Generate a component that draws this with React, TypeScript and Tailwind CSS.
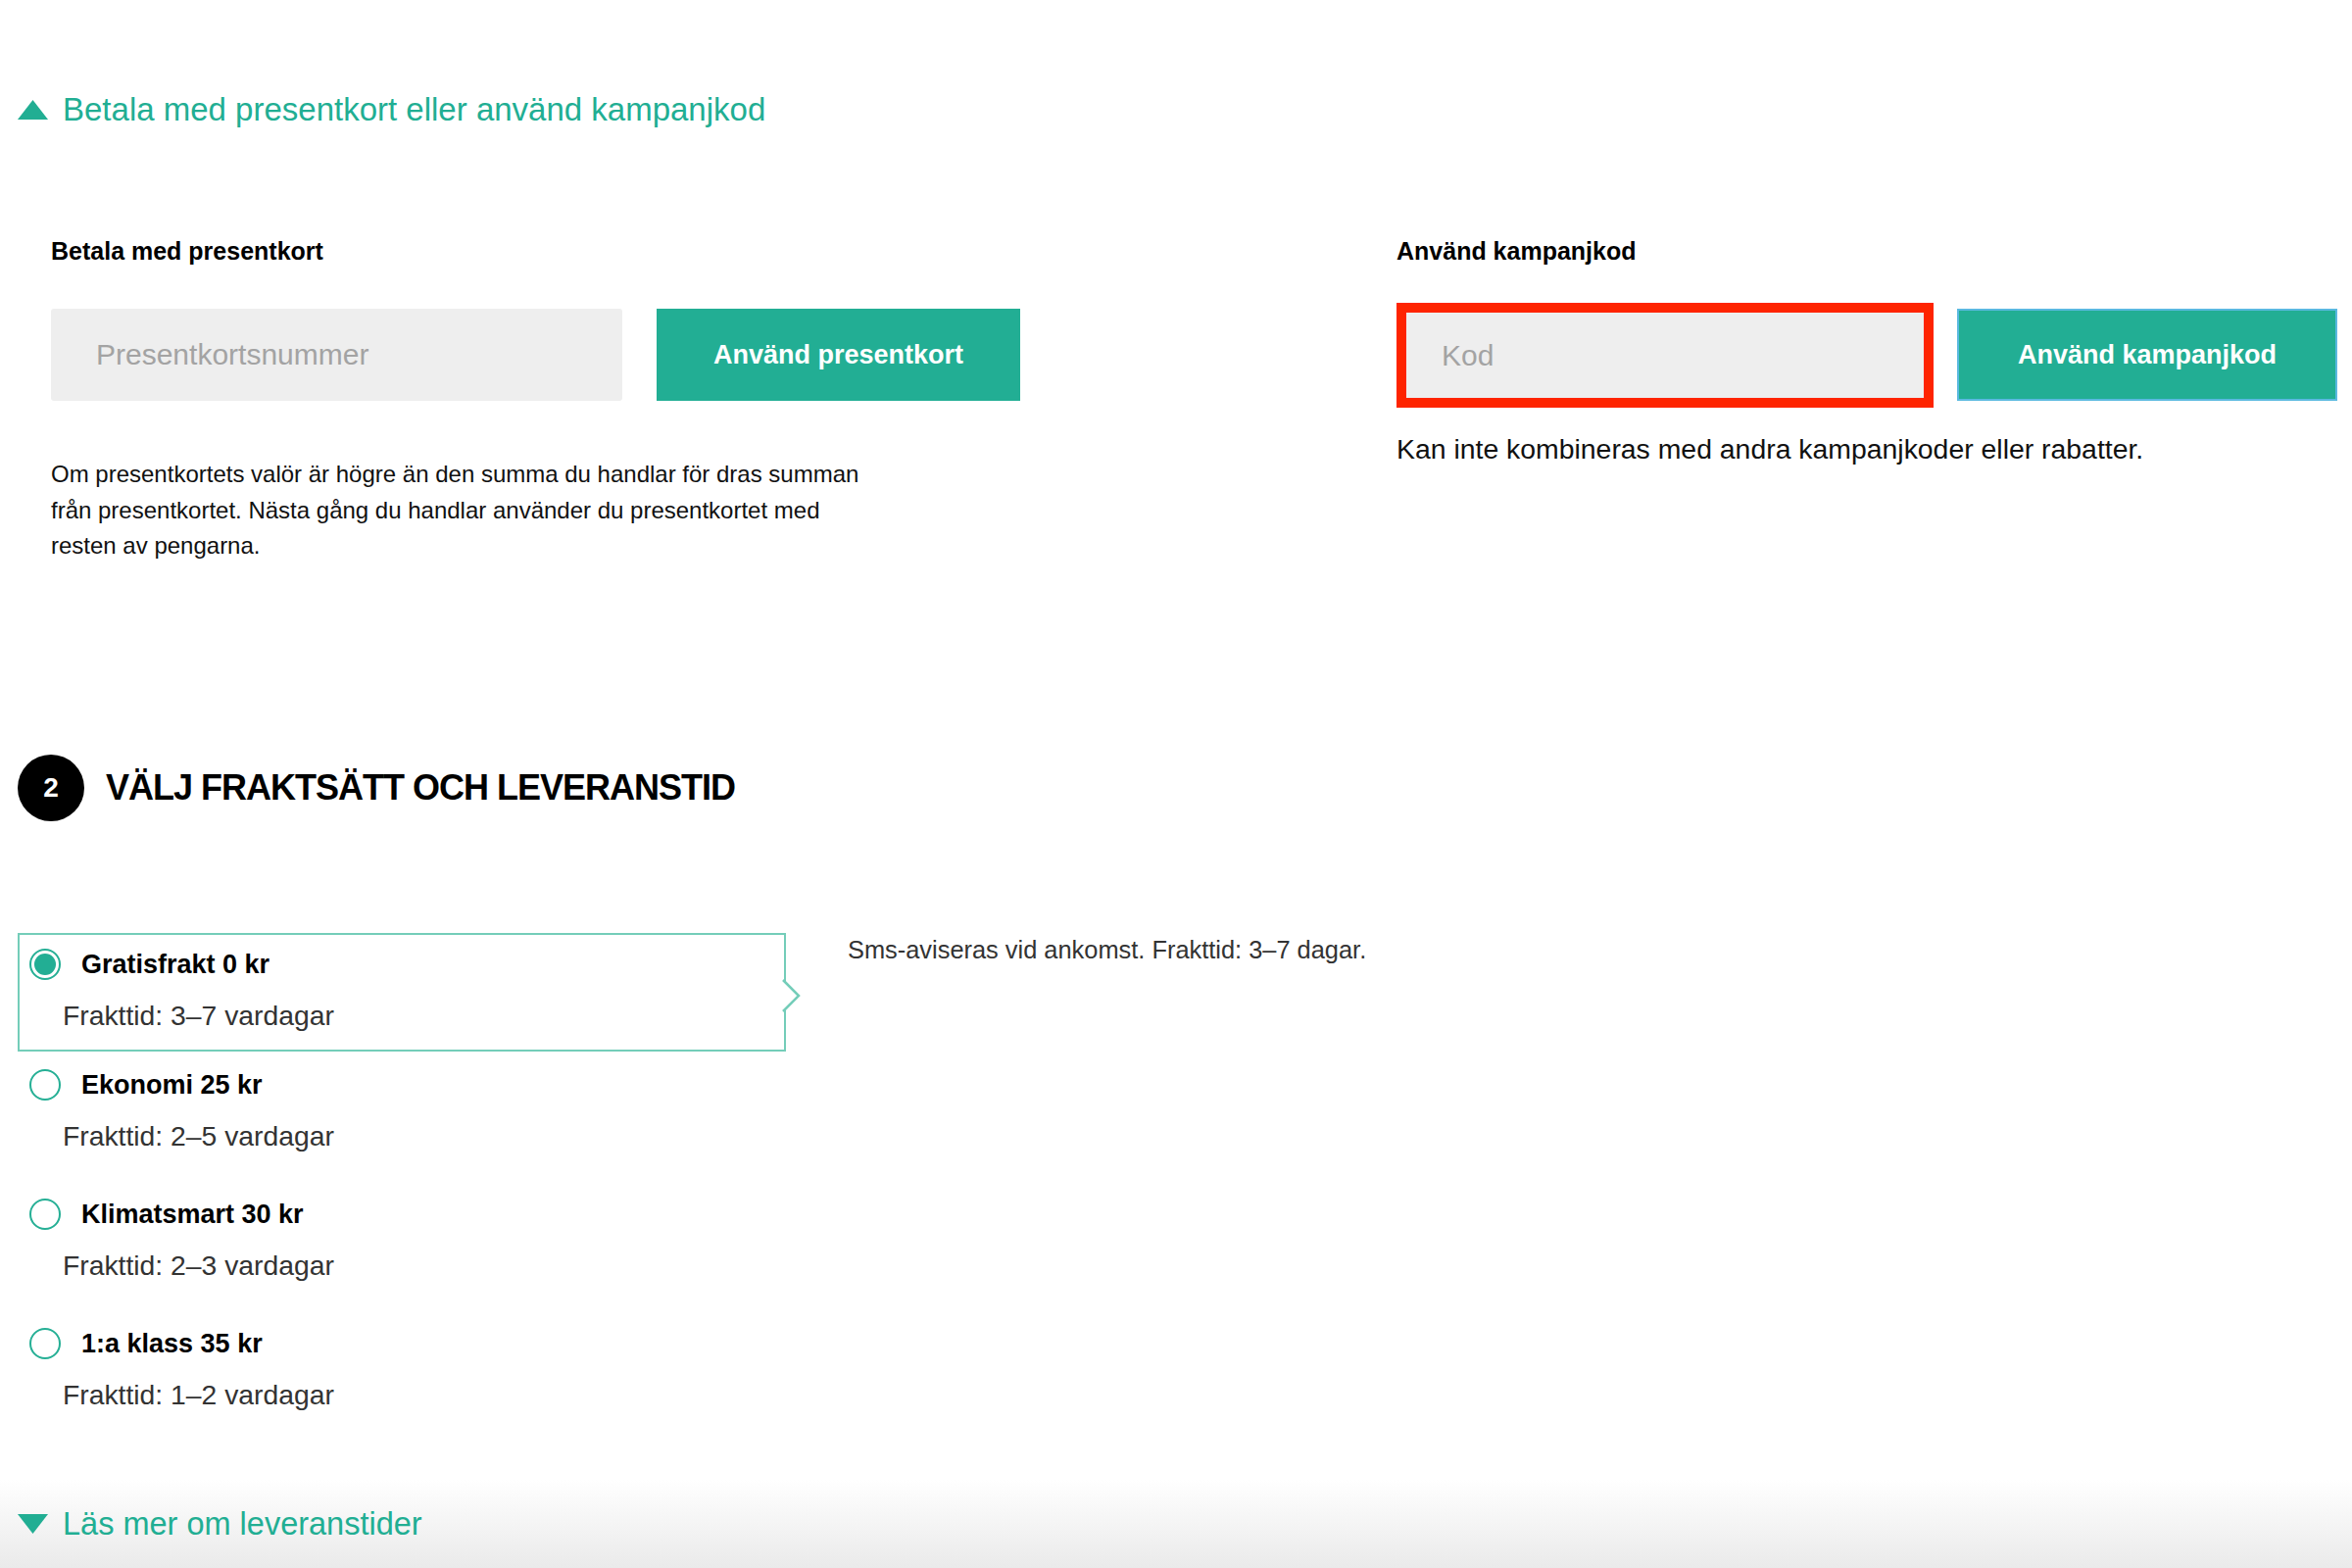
type ShippingOption = {
  id: string;
  title: string;
  time: string;
};

const shippingOptions: ShippingOption[] = [
  { id: "free", title: "Gratisfrakt 0 kr", time: "Frakttid: 3–7 vardagar" },
  { id: "eco", title: "Ekonomi 25 kr", time: "Frakttid: 2–5 vardagar" },
  { id: "climate", title: "Klimatsmart 30 kr", time: "Frakttid: 2–3 vardagar" },
  { id: "first", title: "1:a klass 35 kr", time: "Frakttid: 1–2 vardagar" },
];

function Triangle({ down }: { down?: boolean }) {
  return (
    <svg width="31" height="20" viewBox="0 0 31 20" className="shrink-0">
      {down ? (
        <polygon points="0,0 31,0 15.5,20" fill="#21ae93" />
      ) : (
        <polygon points="15.5,0 31,20 0,20" fill="#21ae93" />
      )}
    </svg>
  );
}

function Radio({ checked }: { checked: boolean }) {
  return (
    <span className="flex h-[32px] w-[32px] shrink-0 items-center justify-center rounded-full border-[2.5px] border-[#25af95] bg-white">
      {checked && <span className="h-[22px] w-[22px] rounded-full bg-[#22ae94]" />}
    </span>
  );
}

function OptionBody({ option, checked }: { option: ShippingOption; checked: boolean }) {
  return (
    <>
      <div className="flex h-[40px] items-center gap-[21px]">
        <Radio checked={checked} />
        <span className="text-[27px] font-bold leading-[40px] text-black">{option.title}</span>
      </div>
      <p className="ml-[34px] mt-[15px] text-[28.3px] leading-[34px] text-[#333333]">{option.time}</p>
    </>
  );
}

export default function App() {
  const selected = "free";

  return (
    <div className="h-[1600px] w-full overflow-hidden bg-[linear-gradient(to_bottom,#ffffff_0,#ffffff_1510px,#eaeaea_1600px)] font-['Liberation_Sans',Arial,sans-serif] text-black">
      <div className="pl-[18px] pr-[15px]">
        <button type="button" className="flex items-center gap-[15px] pt-[92px]">
          <Triangle />
          <span className="text-[33px] leading-[40px] text-[#21ae93]">
            Betala med presentkort eller använd kampanjkod
          </span>
        </button>

        <div className="mt-[109px] flex pl-[34px]">
          <div className="w-[1373px] shrink-0">
            <h3 className="text-[25px] font-bold leading-[30px]">Betala med presentkort</h3>
            <div className="mt-[44px] flex gap-[35px]">
              <input
                placeholder="Presentkortsnummer"
                className="h-[94px] w-[583px] rounded-[3px] bg-[#eeeeee] pl-[46px] text-[30px] outline-none placeholder:text-[#a3a3a3]"
              />
              <button
                type="button"
                className="h-[94px] w-[371px] bg-[#22ae94] text-[27px] font-bold text-white"
              >
                Använd presentkort
              </button>
            </div>
            <p className="mt-[57px] text-[24px] leading-[36.5px] text-[#111111]">
              <span className="block">
                Om presentkortets valör är högre än den summa du handlar för dras summan
              </span>
              <span className="block">
                från presentkortet. Nästa gång du handlar använder du presentkortet med
              </span>
              <span className="block">resten av pengarna.</span>
            </p>
          </div>

          <div className="flex-1">
            <h3 className="text-[25px] font-bold leading-[30px]">Använd kampanjkod</h3>
            <div className="mt-[38px] flex items-start gap-[24px]">
              <input
                placeholder="Kod"
                className="h-[107px] w-[548px] border-[10px] border-[#fe2400] bg-[#eeeeee] pl-[36px] text-[30px] outline-none placeholder:text-[#a3a3a3]"
              />
              <button
                type="button"
                className="mt-[6px] h-[94px] w-[388px] border-2 border-[#5ab9e0] bg-[#22ae94] text-[27px] font-bold text-white"
              >
                Använd kampanjkod
              </button>
            </div>
            <p className="mt-[25px] text-[28.4px] leading-[34px] text-[#111111]">
              Kan inte kombineras med andra kampanjkoder eller rabatter.
            </p>
          </div>
        </div>

        <div className="mt-[194px] flex items-center gap-[22px]">
          <span className="flex h-[68px] w-[68px] items-center justify-center rounded-full bg-black text-[28px] font-bold text-white">
            2
          </span>
          <h2 className="text-[36px] font-bold uppercase leading-[44px] tracking-[-1px]">
            Välj fraktsätt och leveranstid
          </h2>
        </div>

        <div className="mt-[114px] flex items-start">
          <div className="flex w-[784px] shrink-0 flex-col gap-[2px]">
            {shippingOptions.map((option) =>
              option.id === selected ? (
                <div
                  key={option.id}
                  className="relative h-[121px] border-2 border-[#74cdb9] pl-[10px] pt-[10px]"
                >
                  <OptionBody option={option} checked />
                  <svg
                    width="20"
                    height="36"
                    viewBox="0 0 20 36"
                    className="absolute -right-[18px] top-[44px]"
                  >
                    <rect x="0" y="2" width="3" height="32" fill="#ffffff" />
                    <polyline
                      points="1,2 17,18 1,34"
                      fill="#ffffff"
                      stroke="#74cdb9"
                      strokeWidth="2.5"
                    />
                  </svg>
                </div>
              ) : (
                <div key={option.id} className="h-[130px] border-2 border-transparent pl-[10px] pt-[10px]">
                  <OptionBody option={option} checked={false} />
                </div>
              ),
            )}
          </div>
          <p className="ml-[63px] mt-[2px] text-[25.4px] leading-[30px] text-[#333333]">
            Sms-aviseras vid ankomst. Frakttid: 3–7 dagar.
          </p>
        </div>

        <button type="button" className="mt-[66px] flex items-center gap-[15px]">
          <Triangle down />
          <span className="text-[32.5px] leading-[40px] text-[#21ae93]">Läs mer om leveranstider</span>
        </button>
      </div>
    </div>
  );
}
